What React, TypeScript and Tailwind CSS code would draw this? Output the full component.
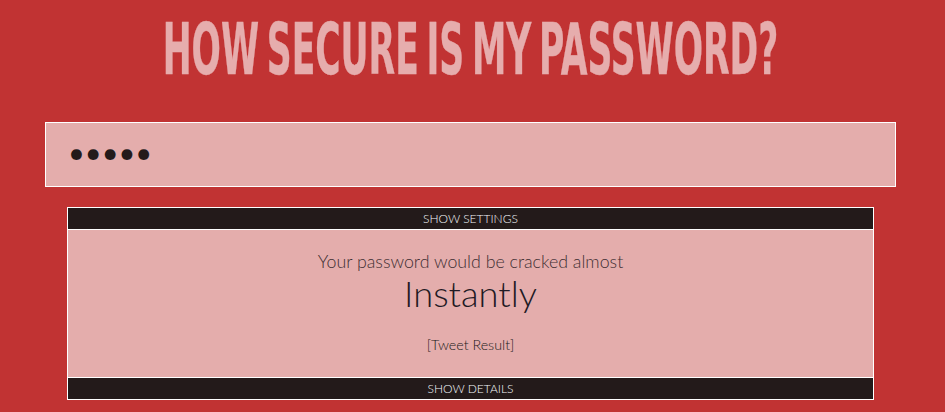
import React from 'react';

const lato = "font-['Lato','Liberation_Sans',sans-serif]";

const BarButton: React.FC<{ label: string; className?: string }> = ({ label, className = '' }) => (
  <button className={`block w-full h-[22px] bg-[#231a1a] text-[#f4f8fa] text-[12px] leading-[21px] text-center font-light ${className}`}>
    {label}
  </button>
);

const App: React.FC = () => {
  return (
    <div className={`h-[412px] w-[945px] overflow-hidden bg-[#c13333] ${lato}`}>
      <h1 className="h-[122px] flex justify-center pt-[7px] pr-[4px]">
        <span className="inline-block whitespace-nowrap font-['DejaVu_Sans_Condensed','DejaVu_Sans',sans-serif] font-bold text-[#e6adad] text-[72px] leading-[84px] scale-x-[0.533] [word-spacing:-8px] [-webkit-text-stroke:0.4px_#e6adad]">
          HOW SECURE IS MY PASSWORD?
        </span>
      </h1>

      <div className="mx-[45px] w-[851px] h-[65px] border border-white bg-[#e4adac] flex items-center pl-[22px]">
        <input
          type="password"
          value="aaaaa"
          readOnly
          className="w-full bg-transparent outline-none text-[#231a1a] text-[29px] leading-[40px] -mt-[6px] font-['Lato','Liberation_Sans',sans-serif]"
        />
      </div>

      <div className="mt-[20px] ml-[67px] w-[807px] h-[193px] border border-white bg-[#e4adac] flex flex-col">
        <BarButton label="SHOW SETTINGS" className="border-b border-white" />
        <div className="flex-1 flex flex-col items-center text-[#231a1a] font-light">
          <p className="mt-[20px] text-[17.8px] leading-[22px] text-[#3f2f33]">Your password would be cracked almost</p>
          <p className="-mt-[1px] text-[36.3px] leading-[44px] text-[#1f1a24]">Instantly</p>
          <a className="mt-[21px] text-[14.3px] leading-[18px] text-[#231a1a]">[Tweet Result]</a>
        </div>
        <BarButton label="SHOW DETAILS" className="border-t border-white" />
      </div>
    </div>
  );
};

export default App;
